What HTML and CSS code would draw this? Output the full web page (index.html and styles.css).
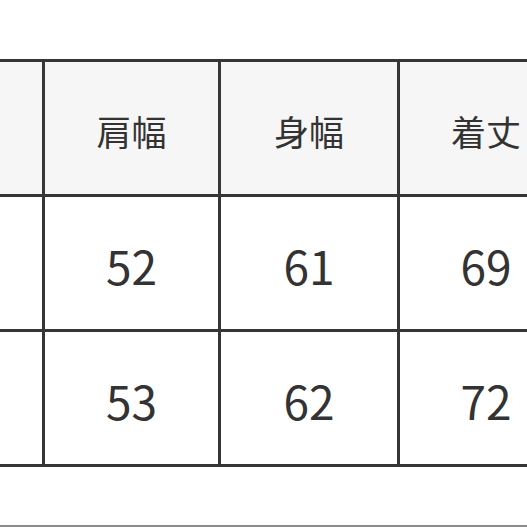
FILE: index.html
```html
<!DOCTYPE html>
<html lang="ja">
<head>
<meta charset="utf-8">
<link rel="stylesheet" href="styles.css">
</head>
<body>
<div class="page">
  <div class="size-table">
    <div class="cell head"></div>
    <div class="cell head">肩幅</div>
    <div class="cell head">身幅</div>
    <div class="cell head">着丈</div>
    <div class="cell num"></div>
    <div class="cell num">52</div>
    <div class="cell num">61</div>
    <div class="cell num">69</div>
    <div class="cell num"></div>
    <div class="cell num">53</div>
    <div class="cell num">62</div>
    <div class="cell num">72</div>
  </div>
  <div class="bottom-rule"></div>
</div>
</body>
</html>
```

FILE: styles.css
```css
html, body {
  margin: 0;
  padding: 0;
  background: #ffffff;
}

.page {
  width: 527px;
  height: 527px;
  overflow: hidden;
  display: flex;
  flex-direction: column;
  padding-top: 59px;
  box-sizing: border-box;
  font-family: "Noto Sans CJK JP", "Noto Sans", sans-serif;
  color: #333333;
}

.size-table {
  display: grid;
  grid-template-columns: 42px 173px 176px 172px;
  grid-auto-rows: 132px;
  gap: 3px;
  padding: 3px 0;
  background: #363636;
  width: max-content;
}

.cell {
  display: flex;
  align-items: center;
  justify-content: center;
  background: #ffffff;
}

.head {
  background: #f6f6f6;
  font-size: 35px;
  padding-top: 4px;
  box-sizing: border-box;
}

.num {
  font-size: 46px;
  padding-top: 4px;
  box-sizing: border-box;
}

.bottom-rule {
  margin-top: auto;
  height: 2px;
  background: #8a8a8a;
}
```
